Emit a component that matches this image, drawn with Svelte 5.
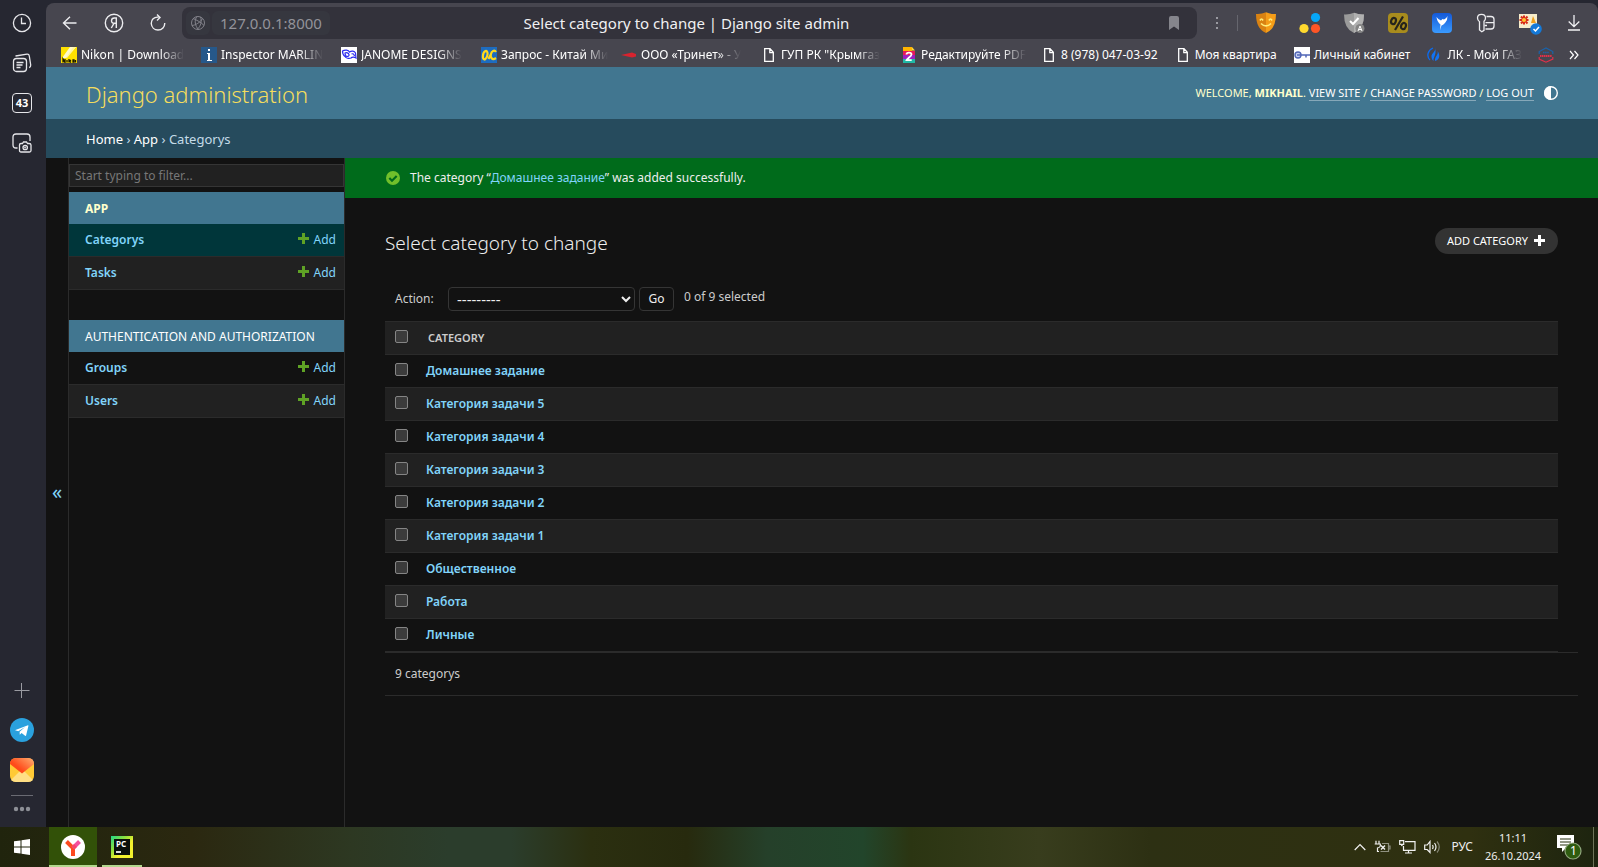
<script>
  const nav = [
    { name: 'App', current: true, models: [{ name: 'Categorys', current: true }, { name: 'Tasks' }] },
    { name: 'Authentication and Authorization', models: [{ name: 'Groups' }, { name: 'Users' }] }
  ];
  const categories = [
    'Домашнее задание',
    'Категория задачи 5',
    'Категория задачи 4',
    'Категория задачи 3',
    'Категория задачи 2',
    'Категория задачи 1',
    'Общественное',
    'Работа',
    'Личные'
  ];
  const bookmarks = [
    { icon: 'nikon', text: 'Nikon | Download', clip: true },
    { icon: 'info', text: 'Inspector MARLIN', clip: true },
    { icon: 'janome', text: 'JANOME DESIGNS', clip: true },
    { icon: 'oc', text: 'Запрос - Китай Ми', clip: true },
    { icon: 'trinet', text: 'ООО «Тринет» - У', clip: true },
    { icon: 'page', text: 'ГУП РК "Крымгаз', clip: true },
    { icon: 'pdf', text: 'Редактируйте PDF', clip: true },
    { icon: 'page', text: '8 (978) 047-03-92', full: true },
    { icon: 'page', text: 'Моя квартира', full: true },
    { icon: 'key', text: 'Личный кабинет', full: true },
    { icon: 'flame', text: 'ЛК - Мой ГАЗ', short: true },
    { icon: 'gos', text: '' }
  ];
  let picked = $state(categories.map(() => false));
  let count = $derived(picked.filter(Boolean).length);
</script>

{#snippet plus(color)}
  <svg width="12" height="12" viewBox="0 0 12 12" aria-hidden="true"><path fill={color} d="M4 0h3v4h4v3H7v4H4V7H0V4h4z" /></svg>
{/snippet}

{#snippet favicon(name)}
  <svg width="16" height="16" viewBox="0 0 16 16" aria-hidden="true">
    {#if name === 'nikon'}
      <rect width="16" height="16" fill="#ffe100" />
      <path d="M9 0h6L5 11H1z" fill="#fff" opacity=".8" /><path d="M15 0 6 11H5L12 0z" fill="#fff6a0" />
      <rect y="11" width="16" height="5" fill="#ffe100" />
      <path d="M2 15.500v-3.500l2 3.500v-3.500M6 13v2.500M8 12v3.500M10 13l-1.500 1 1.500 1.500M12 13h1v2h-1zM14.500 15.500v-2.500" stroke="#1a1800" stroke-width="1.300" fill="none" />
    {:else if name === 'info'}
      <rect width="16" height="16" fill="#26588a" />
      <path d="M7 2h2v2H7zM6 6h3v7h2v1H6v-1h1V7H6z" fill="#fff" />
    {:else if name === 'janome'}
      <rect width="16" height="16" fill="#fff" />
      <path d="M1.500 4c2.500-1.500 6-1 7 1 2-1.500 5-1 6 1l.5 5c-1.500-1.200-4-1.200-5 0-2 .8-5 .3-6-1.500C2.500 8.500 1.500 6 1.500 4zM4 6c1.500-.8 3.500 0 4 1.500S7 9.500 6 9.500 4 7.500 4 6zM10.500 7c1.500-.7 2.500 0 3 2" fill="none" stroke="#2b2bf0" stroke-width="1.200" />
    {:else if name === 'oc'}
      <rect width="16" height="16" fill="#1d6cc0" />
      <path d="M3.500 12.500C1 12 1.500 5.500 4.500 4 7.500 3.500 7 10 4.500 12zM15 5c-1.500-2.500-4.500-1-5 2L7.500 12M10 7c-1 3 1 7 5 4" fill="none" stroke="#ffd91a" stroke-width="2.200" />
    {:else if name === 'trinet'}
      <path d="M0 8 11 5.500 15 7v2.500L11 10.500z" fill="#d8232f" />
    {:else if name === 'page'}
      <path d="M3.700 1.700h5.300L12.300 5.200v9.100H3.700zM8.800 1.700v4h3.500" fill="none" stroke="#fff" stroke-width="1.300" />
    {:else if name === 'pdf'}
      <path d="M2 0h9v4H2z" fill="#ffb400" /><path d="M11 0l3 3.500h-3z" fill="#ffd83a" />
      <path d="M2 4h12v5H2z" fill="#e8185a" /><path d="M2 8h12v4H2z" fill="#a020c0" /><path d="M2 12h12v4H2z" fill="#21b8a6" />
      <path d="M5.500 7.500c0-2.500 5-2.500 5 0 0 2-4.500 4-5 5.700h5.200" fill="none" stroke="#fff" stroke-width="1.800" />
    {:else if name === 'key'}
      <rect width="16" height="16" fill="#fff" />
      <circle cx="4" cy="8" r="3" fill="#c9d2f2" stroke="#5267b8" stroke-width="1.400" /><path d="M3 8h13M12 8v2.500" stroke="#5267b8" stroke-width="1.500" />
    {:else if name === 'flame'}
      <path d="M6 1C1 3-1 9 3 13" fill="none" stroke="#0b6cf0" stroke-width="1.300" />
      <path d="M8 0c2 4-4 6-3.500 10 .2 2 1 3 2 4C6 10 10 8 8 0z" fill="#1173f5" />
      <path d="M10.500 4c1.500 4-3 5-2.500 10 4-1 6-5 2.500-10z" fill="#1173f5" />
    {:else if name === 'gos'}
      <path d="M1.200 7V4.500L8 1l6.800 3.500V7" fill="none" stroke="#1b62a8" stroke-width="1.200" />
      <path d="M1.200 10V12L8 15.200l6.800-3.200v-2" fill="none" stroke="#e0304a" stroke-width="1.200" />
      <path d="M5 5.500h6" stroke="#1b62a8" stroke-width="1.500" stroke-dasharray="1.500 .6" /><path d="M2 9h12" stroke="#e0304a" stroke-width="1.800" stroke-dasharray="1.400 .5" />
    {/if}
  </svg>
{/snippet}

<div class="desktop">
  <div class="window">
    <aside class="strip">
      <button aria-label="History">
        <svg width="20" height="20" viewBox="0 0 20 20"><circle cx="10" cy="10" r="8.600" /><path d="M9.500 4.500V10.500H14" /></svg>
      </button>
      <button aria-label="Collections">
        <svg width="20" height="20" viewBox="0 0 20 20"><rect x="1.500" y="5.500" width="13" height="13" rx="3" /><path d="M3.500 3 15 1.200q2-.2 2.300 1.800L18.700 12q.1 2.200-1.500 2.700M4.500 9.500h7M4.500 12h6M4.500 14.500h4" /></svg>
      </button>
      <button class="tabs" aria-label="43 tabs">43</button>
      <button aria-label="Screenshot">
        <svg width="20" height="20" viewBox="0 0 20 20"><path d="M5.500 15H4q-3 0-3-3V4q0-3 3-3h11q3 0 3 3v4M7.500 12q0-1.500 1.500-1.500h1.500l1-1.500h3l1 1.500H17q2 0 2 1.500v5.500q0 1.500-1.500 1.500H9q-1.500 0-1.500-1.500z" /><circle cx="13.200" cy="14.500" r="2.200" /><circle cx="13.200" cy="14.500" r=".4" /></svg>
      </button>
      <span class="spacer"></span>
      <button class="dim" aria-label="Add panel">
        <svg width="20" height="20" viewBox="0 0 20 20"><path d="M2.500 10.500h15M9.500 3v15" stroke-width="1" /></svg>
      </button>
      <button aria-label="Telegram">
        <svg width="24" height="24" viewBox="0 0 24 24"><circle cx="12" cy="12" r="12" fill="#2aa1de" stroke="none" /><path d="M4.800 12.200 18 7.200q.6 0 .4.800l-2.300 9.500q-.3.800-1 .3l-3.500-2.700-1.800 1.700-.2-3 5.500-4.800-6.800 4.300-3-1z" fill="#fff" stroke="none" /></svg>
      </button>
      <button aria-label="Mail">
        <svg width="24" height="24" viewBox="0 0 24 24">
          <defs><linearGradient id="mail" x1="0" x2="1" y1=".8" y2="0"><stop offset=".3" stop-color="#ff4a1a" /><stop offset="1" stop-color="#ffb070" /></linearGradient></defs>
          <rect width="24" height="24" rx="6" fill="#ffca36" stroke="none" /><path d="M1 22 12 11l11 11q-2 2-5 2H6q-3 0-5-2z" fill="#ffdf85" stroke="none" />
          <path d="M0 6q0-6 6-6h12q6 0 6 6L12 15.500z" fill="url(#mail)" stroke="none" />
        </svg>
      </button>
      <hr />
      <button class="more" aria-label="More">
        <svg width="18" height="6" viewBox="0 0 18 6"><g fill="#8d8f96" stroke="none"><circle cx="3" cy="3" r="2.200" /><circle cx="9" cy="3" r="2.200" /><circle cx="15" cy="3" r="2.200" /></g></svg>
      </button>
    </aside>

    <div class="browser">
      <div class="toolbar">
        <div class="navbtns">
          <button aria-label="Back"><svg width="18" height="18" viewBox="0 0 18 18"><path d="M15.500 9H2.500M9 2.700 2.500 9 9 15.300" /></svg></button>
          <button aria-label="Yandex"><svg width="20" height="20" viewBox="0 0 20 20"><circle cx="10" cy="10" r="8.700" /><path d="M12.300 15V5h-2C6.800 5 6.500 10.300 10 10.300h2.300M10 10.300 7.300 15" /></svg></button>
          <button aria-label="Reload"><svg width="18" height="18" viewBox="0 0 18 18"><path d="M9.500 3.200C5 2.500 2 6 2.300 9.800 2.600 13.500 5.500 16 9 16c4 0 7-3.200 6.700-7M8 .5l3 2.900-3 3" /></svg></button>
        </div>
        <div class="address">
          <span class="site"><svg width="16" height="16" viewBox="0 0 16 16"><circle cx="8" cy="8" r="6.500" /><path d="M3 3.500C6 4.500 12 8 14 10.500M2 10.500C5 10.500 11 7 12.500 3.500M7 1.500C4 5 5 11 8.500 14.500M10.500 2c1.500 4 .5 9-3 12" /></svg></span>
          <span class="url">127.0.0.1:8000</span>
          <span class="title">Select category to change | Django site admin</span>
          <button class="save" aria-label="Bookmark"><svg width="10" height="14" viewBox="0 0 10 14"><path d="M0 2q0-2 2-2h6q2 0 2 2v12L5 10.500 0 14z" fill="#85858c" /></svg></button>
        </div>
        <button class="dots" aria-label="Menu"><svg width="4" height="14" viewBox="0 0 4 14"><path d="M1 1h2v2H1zM1 6h2v2H1zM1 11h2v2H1z" fill="#9a9aa1" /></svg></button>
        <span class="sep"></span>
        <div class="exts">
          <button aria-label="Mask"><svg width="22" height="22" viewBox="0 0 22 22"><path d="M1 2q5 .5 10-1.700V21Q1 17 1 2z" fill="#d98212" /><path d="M21 2Q16 2.500 11 .3V21Q21 17 21 2z" fill="#f59d18" /><path d="M5 8.500q1.500-3 3 0M14 8.500q1.500-3 3 0M6 11.500q5 5 10 0" fill="none" stroke="#ffec7a" stroke-width="1.700" /></svg></button>
          <button aria-label="Alice"><svg width="22" height="22" viewBox="0 0 22 22"><circle cx="16.500" cy="5.500" r="4.600" fill="#06a7f7" /><circle cx="5" cy="16.500" r="4.600" fill="#ffd92e" /><circle cx="16.500" cy="16.500" r="4.600" fill="#ff5526" /></svg></button>
          <button aria-label="Shield"><svg width="22" height="22" viewBox="0 0 22 22"><path d="M1 2.500Q6 3 11 .8 16 3 21 2.500 21 17 11 21 1 17 1 2.500z" fill="#9a9a9a" /><path d="M11 .8Q16 3 21 2.500 21 17 11 21z" fill="#b0b0b0" /><path d="m7 9 3 3 5.500-6" fill="none" stroke="#fff" stroke-width="2" /><circle cx="17" cy="16.500" r="4.500" fill="#858585" /><path d="m15 19 2-5 2 5M15.800 17.500h2.400" fill="none" stroke="#fff" /></svg></button>
          <button aria-label="Discounts"><svg width="20" height="20" viewBox="0 0 20 20"><rect width="20" height="20" rx="4" fill="#a88c1d" /><g fill="none" stroke="#26241c" stroke-width="2.200"><ellipse cx="5.500" cy="8" rx="2.300" ry="3.200" transform="rotate(20 5.500 8)" /><ellipse cx="15.500" cy="13" rx="2.300" ry="3.200" transform="rotate(20 15.500 13)" /><path d="M15 3.500 7 17" /></g></svg></button>
          <button aria-label="Bird"><svg width="20" height="20" viewBox="0 0 20 20"><defs><linearGradient id="bird" x2="0" y2="1"><stop stop-color="#1459d8" /><stop offset="1" stop-color="#3a9bff" /></linearGradient></defs><rect width="20" height="20" rx="4" fill="url(#bird)" /><path d="M4.500 4q2 3 4.500 3.500L10.500 6l1.500.5Q14.500 5.500 15.500 3q.3 4-2.500 7-2 2-3.500 2.500L8 17l.5-5.500Q5 9 4.500 4z" fill="#fff" /></svg></button>
          <button aria-label="Passwords"><svg width="20" height="20" viewBox="0 0 20 20" fill="none" stroke="#ededf0" stroke-width="1.300"><path d="M10.500 3.500h4.500q3 0 3 3v6.500q0 3-3 3H9.500M9.500 9.700h8.500M8.500 12.500h2.500" /><path d="M3.500 8.700Q1.500 7.500 1.500 5q0-3.700 4-3.700t4 3.700q0 2-1.500 3.300v9L5.800 18.700 3.500 17z" /></svg></button>
          <button aria-label="Tasks"><svg width="24" height="24" viewBox="0 0 24 24"><rect x="1" y="3" width="18" height="14" fill="#f7edcb" /><path d="M6 4.500v9M1.500 9h9M3 5.500l6.500 7M9.500 5.500 3 12.500" stroke="#d92b17" stroke-width="2" /><circle cx="6" cy="9" r="2" fill="#ffc531" /><path d="m13 12 2-7 3 7z" fill="#f0a01c" /><circle cx="18" cy="18" r="5.800" fill="#1479d8" /><path d="m15.500 18 2 2 3.500-4" fill="none" stroke="#fff" stroke-width="1.500" /></svg></button>
          <button aria-label="Downloads"><svg width="16" height="18" viewBox="0 0 16 18" fill="none" stroke="#f2f2f4" stroke-width="1.300"><path d="M8 1v11.500M2.700 7.500 8 12.700l5.300-5.200M2 16h12" /></svg></button>
        </div>
      </div>

      <nav class="bookmarks" aria-label="Bookmarks">
        {#each bookmarks as b}
          <a href="#top" class={[b.clip && 'clip', b.short && 'short', b.full && 'full']} aria-label={b.text || 'Госуслуги'}>
            {@render favicon(b.icon)}{#if b.text}<span>{b.text}</span>{/if}
          </a>
        {/each}
        <button aria-label="More bookmarks"><svg width="10" height="10" viewBox="0 0 10 10" fill="none" stroke="#fff" stroke-width="1.200"><path d="m1 1 3.500 4L1 9M5.500 1 9 5 5.500 9" /></svg></button>
      </nav>

      <div class="admin">
        <header>
          <a class="brand" href="#home">Django administration</a>
          <div class="tools">
            <span>Welcome, <strong>Mikhail</strong>. <a href="#site">View site</a> / <a href="#password">Change password</a> / <button class="logout">Log out</button></span>
            <button class="theme" aria-label="Toggle theme"><svg width="14" height="14" viewBox="0 0 14 14"><circle cx="7" cy="7" r="6.300" fill="none" stroke="#fff" stroke-width="1.400" /><path d="M7 0a7 7 0 0 0 0 14z" fill="#fff" /></svg></button>
          </div>
        </header>
        <nav class="crumbs" aria-label="Breadcrumbs"><a href="#home">Home</a> › <a href="#app">App</a> › Categorys</nav>

        <div class="body">
          <button class="toggle" aria-label="Toggle navigation">«</button>
          <nav class="sidebar" aria-label="Sidebar">
            <input type="search" placeholder="Start typing to filter..." aria-label="Filter navigation items" />
            {#each nav as app}
              <table>
                <caption class:current={app.current}>{app.name}</caption>
                <tbody>
                  {#each app.models as m}
                    <tr class:current={m.current}>
                      <th scope="row"><a href="#model">{m.name}</a></th>
                      <td><a href="#add">{@render plus('#5fa225')}Add</a></td>
                    </tr>
                  {/each}
                </tbody>
              </table>
            {/each}
          </nav>

          <main>
            <p class="message">
              <svg width="14" height="14" viewBox="0 0 14 14" aria-hidden="true"><circle cx="7" cy="7" r="7" fill="#70bf2b" /><path d="m3.300 7 2.700 2.700 4.700-4.700" fill="none" stroke="#006b1b" stroke-width="2.200" /></svg>
              <span>The category “<a href="#item">Домашнее задание</a>” was added successfully.</span>
            </p>
            <div class="content">
              <div class="head">
                <h1>Select category to change</h1>
                <a class="addlink" href="#add">Add category {@render plus('#fff')}</a>
              </div>
              <div class="actions">
                <label for="action">Action:</label>
                <select id="action"><option>---------</option><option>Delete selected categorys</option></select>
                <button>Go</button>
                <span>{count} of 9 selected</span>
              </div>
              <table class="results">
                <thead>
                  <tr><th class="check"><input type="checkbox" aria-label="Select all" /></th><th>Category</th></tr>
                </thead>
                <tbody>
                  {#each categories as c, i}
                    <tr>
                      <td class="check"><input type="checkbox" aria-label={'Select ' + c} bind:checked={picked[i]} /></td>
                      <th scope="row"><a href="#item">{c}</a></th>
                    </tr>
                  {/each}
                </tbody>
              </table>
              <p class="paginator">9 categorys</p>
            </div>
          </main>
        </div>
      </div>
    </div>
  </div>

  <footer class="taskbar">
    <button class="start" aria-label="Start"><svg width="16" height="16" viewBox="0 0 16 16"><path d="M0 2.300 6.500 1.400v6.100H0zM7.500 1.200 16 0v7.500H7.500zM0 8.500h6.500v6.100L0 13.700zM7.500 8.500H16V16l-8.500-1.200z" fill="#fff" /></svg></button>
    <button class="app active" aria-label="Yandex Browser">
      <svg width="24" height="24" viewBox="0 0 24 24"><circle cx="12" cy="12" r="12" fill="#fff" /><path d="M12 21v-8M5.500 6.500 12 13" stroke="#fc4a1f" stroke-width="4" fill="none" /><path d="M12 13l6.500-6.500" stroke="#f44f9d" stroke-width="4" /><path d="m12 13 2.500-2.500" stroke="#f5456a" stroke-width="4" /></svg>
    </button>
    <button class="app pycharm" aria-label="PyCharm">
      <svg width="22" height="22" viewBox="0 0 22 22"><defs><linearGradient id="pc" x2="1" y2="1"><stop stop-color="#21d789" /><stop offset=".35" stop-color="#8fe03c" /><stop offset=".6" stop-color="#f2f02e" /></linearGradient></defs><rect width="22" height="22" fill="url(#pc)" /><rect x="3" y="3" width="16" height="16" fill="#0a0f0c" /><rect x="5" y="15" width="5" height="2" fill="#ddd" /><text x="5" y="11" font-size="8" font-weight="700" fill="#fff" font-family="Noto Sans, sans-serif">PC</text></svg>
    </button>
    <span class="spacer"></span>
    <div class="tray">
      <svg width="12" height="8" viewBox="0 0 12 8"><path d="m.7 7 5.300-5.500L11.300 7" /></svg>
      <svg width="17" height="14" viewBox="0 0 17 14"><path d="M2 .7v3M5 .7v3M.7 4h5.600v2Q6 7.500 3.500 8V11.500h1.500" /><path d="M8 3.500h6.500v8H6.500M14.500 6h1.500v3h-1.500" opacity=".5" /><path d="m7 5.500 4 4M11 5.500l-4 4" stroke-width="1.400" /></svg>
      <svg width="17" height="14" viewBox="0 0 17 14"><path d="M6 1.700h10v8.600H4.500V6M9.500 10.500V13M6 13h7M.7.700h4v3.600H3.500L2.700 6v-1.700h-2z" /></svg>
      <svg width="17" height="14" viewBox="0 0 17 14"><path d="M.7 5h2.500L6 1.500v11L3.200 9.500H.7zM8.500 5q1.200 2 0 4M10.500 3q3 4 0 8" /><path d="M13 1.500q4.500 5.500 0 11" opacity=".45" /></svg>
      <span class="lang">РУС</span>
      <time>11:11<br />26.10.2024</time>
      <button class="notes" aria-label="Notifications">
        <svg width="25" height="25" viewBox="0 0 25 25"><path d="M0 0h17v13H9l-4 4v-4H0z" fill="#fff" stroke="none" /><path d="M3 4h11M3 7h11M3 10h8" stroke="#26300f" stroke-width="1.200" /><circle cx="16" cy="16" r="8" fill="#2f5c10" stroke="#8fa67c" /></svg><b>1</b>
      </button>
    </div>
  </footer>
</div>

<style>
  :global(body) { margin: 0; background: #121212; }
  * { box-sizing: border-box; }
  .desktop { display: flex; flex-direction: column; min-height: 100vh; font: 12px/18px "Noto Sans", "Open Sans", sans-serif; color: #eee; background: #262731; }
  button { font: inherit; color: inherit; background: none; border: 0; padding: 0; cursor: pointer; }
  a { color: #81d4fa; text-decoration: none; }
  svg { display: block; flex: none; }
  .spacer { flex: 1; }
  .window { flex: 1; display: flex; }

  .strip { width: 46px; flex: none; display: flex; flex-direction: column; align-items: center; gap: 16px; padding: 11px 2px 0 0; }
  .strip button { width: 24px; height: 24px; display: grid; place-items: center; }
  .strip svg { fill: none; stroke: #e6e6ea; stroke-width: 1.3; }
  .strip .dim svg { stroke: #9a9ba2; }
  .strip .tabs { width: 20px; height: 20px; margin: 2px 0; border: 1px solid #e6e6ea; border-radius: 4px; font-size: 11px; font-weight: 700; color: #fff; }
  .strip hr { width: 22px; margin: -3px 0 0; border: 0; border-top: 1px solid #6a6b73; }
  .strip .more { height: 6px; margin: -6px 0 15px; }

  .browser { flex: 1; min-width: 0; margin-top: 3px; display: flex; flex-direction: column; background: #47464f; border-radius: 8px 8px 0 0; overflow: hidden; }
  .toolbar { display: flex; align-items: center; height: 40px; padding: 0 12px 0 14px; }
  .navbtns { display: flex; gap: 24px; width: 122px; }
  .navbtns button { width: 20px; height: 20px; display: grid; place-items: center; }
  .navbtns svg { fill: none; stroke: #ececef; stroke-width: 1.4; }
  .address { flex: 1; min-width: 0; display: flex; align-items: center; height: 32px; background: #33323b; border-radius: 8px; padding: 0 18px 0 4px; font-size: 15px; }
  .site { width: 24px; height: 24px; display: grid; place-items: center; background: #36373f; border-radius: 6px; }
  .site svg { fill: none; stroke: #83838b; stroke-width: 1; }
  .url { margin-left: 2px; padding: 2px 8px; height: 24px; line-height: 20px; background: #36373f; border-radius: 6px; color: #93939a; }
  .title { flex: 1; text-align: center; padding-right: 126px; white-space: nowrap; overflow: hidden; color: #f0f0f2; line-height: 24px; }
  .dots { margin: 0 18px; }
  .sep { width: 1px; height: 16px; background: #66666e; margin-right: 16px; }
  .exts { display: flex; align-items: center; gap: 20px; }
  .exts button { width: 24px; display: grid; place-items: center; }

  .bookmarks { display: flex; align-items: center; height: 24px; padding: 0 19px 0 15px; gap: 13px; white-space: nowrap; }
  .bookmarks a { display: flex; align-items: center; gap: 4px; color: #fff; }
  .bookmarks .clip { width: 127px; flex: none; }
  .bookmarks .short { width: 98px; flex: none; }
  .bookmarks .full { padding-right: 4px; }
  .bookmarks .clip span, .bookmarks .short span { mask-image: linear-gradient(90deg, #000 calc(100% - 24px), transparent); }
  .bookmarks button { margin-left: auto; }

  .admin { flex: 1; display: flex; flex-direction: column; background: #121212; }
  header { display: flex; align-items: center; justify-content: space-between; height: 52px; padding: 0 40px; background: #417690; color: #ffc; }
  .brand { font-size: 22px; line-height: 32px; padding-top: 2px; font-weight: 300; color: #f5dd5d; }
  .tools { display: flex; gap: 10px; align-items: center; font-size: 11px; text-transform: uppercase; line-height: 16px; }
  .tools a, .logout { color: #fff; border-bottom: 1px solid #86a8b9; text-transform: uppercase; line-height: 14px; }
  .crumbs { height: 39px; padding: 11px 40px 0; background: #264b5d; color: #c4dce8; font-size: 13px; }
  .crumbs a { color: #fff; }

  .body { flex: 1; display: flex; }
  .toggle { width: 22px; flex: none; padding-bottom: 2px; font-size: 20px; color: #81d4fa; }
  .sidebar { width: 277px; flex: none; border: solid #2b2b2b; border-width: 0 1px; padding-top: 6px; }
  .sidebar input { display: block; width: 100%; height: 23px; margin: 0 0 5px; padding: 0 5px; border: 1px solid #353535; background: #212121; color: #eee; font: inherit; outline: 0; }
  .sidebar input::placeholder { color: #777; opacity: 1; }
  .sidebar table { width: 100%; border-spacing: 0; margin-bottom: 30px; }
  caption { height: 32px; padding: 8px 16px 0; background: #417690; color: #fff; text-align: left; text-transform: uppercase; }
  caption.current { color: #ffc; font-weight: 700; }
  .sidebar tr:nth-child(even) { background: #212121; }
  .sidebar tr.current { background: #00363a; }
  .sidebar th, .sidebar td { height: 33px; border-bottom: 1px solid #2b2b2b; padding: 0 16px; }
  .sidebar th { text-align: left; font-weight: 600; }
  .sidebar td { padding: 0 8px; }
  .sidebar td a { display: flex; justify-content: flex-end; gap: 4px; }
  .sidebar td svg { margin-top: 2px; }

  main { flex: 1; min-width: 0; }
  .message { display: flex; align-items: center; gap: 10px; height: 40px; margin: 0; padding: 0 41px; background: #006b1b; }
  .content { padding: 30px 40px; }
  .head { display: flex; justify-content: space-between; align-items: flex-start; height: 59px; }
  h1 { margin: 0; font-size: 19px; line-height: 30px; font-weight: 300; }
  .addlink { display: flex; align-items: center; gap: 6px; height: 26px; padding: 0 12px; border-radius: 13px; background: #333; color: #fff; font-size: 11px; text-transform: uppercase; }
  .actions { display: flex; align-items: center; height: 24px; margin-bottom: 10px; padding-left: 10px; }
  .actions label { width: 53px; color: #ccc; }
  .actions select { width: 187px; height: 24px; padding: 0 4px; border: 1px solid #353535; border-radius: 4px; background: #121212; color: #eee; font: inherit; font-size: 15px; }
  .actions button { width: 35px; height: 24px; margin: 0 10px 0 4px; border: 1px solid #353535; border-radius: 4px; }
  .actions span { color: #ccc; line-height: 16px; padding-bottom: 4px; }
  .results { width: 100%; border-collapse: collapse; border-top: 1px solid #2b2b2b; }
  .results tr { height: 33px; border-bottom: 1px solid #2b2b2b; }
  .results thead tr, .results tbody tr:nth-child(even) { background: #212121; }
  .results th { text-align: left; padding: 0; font-weight: 600; }
  .results thead th { padding-left: 2px; font-size: 11px; color: #ccc; text-transform: uppercase; }
  .results .check { width: 41px; padding: 0 0 4px 10px; }
  .results input { display: block; appearance: none; width: 13px; height: 13px; margin: 0; border: 1px solid #858585; border-radius: 2px; background: #3b3b3b; }
  .results input:checked { background: #81d4fa; }
  .paginator { margin: 0 -20px 0 0; height: 44px; padding: 12px 10px; border: solid #2b2b2b; border-width: 1px 0; color: #ccc; }

  .taskbar { display: flex; height: 40px; background: linear-gradient(90deg, #20240d, #2b2810 12%, #2d3822 22%, #2b3d2c 28%, #2b3d2c 32%, #2b2f10 37%, #272a0e 43%, #25402a 48%, #22452b 54%, #2b3512 57%, #383d1d 65%, #2d3013 72%, #2f3010 92%, #1d240f); }
  .start { width: 49px; padding-left: 14px; }
  .app { width: 48px; display: grid; place-items: center; border-bottom: 2px solid #b3d88e; padding-top: 2px; }
  .active { background: #325108; }
  .pycharm { width: 40px; margin-left: 5px; }
  .tray { display: flex; align-items: center; gap: 8px; margin-right: 4px; padding-right: 11px; border-right: 1px solid #6d7358; }
  .tray svg { fill: none; stroke: #f2f2f2; stroke-width: 1.2; }
  .lang { margin: 0 2px; }
  time { width: 60px; text-align: center; font-size: 11px; }
  .notes { position: relative; width: 25px; margin-left: 6px; }
  .notes b { position: absolute; left: 13px; top: 7px; font-weight: 400; color: #fff; }
</style>
